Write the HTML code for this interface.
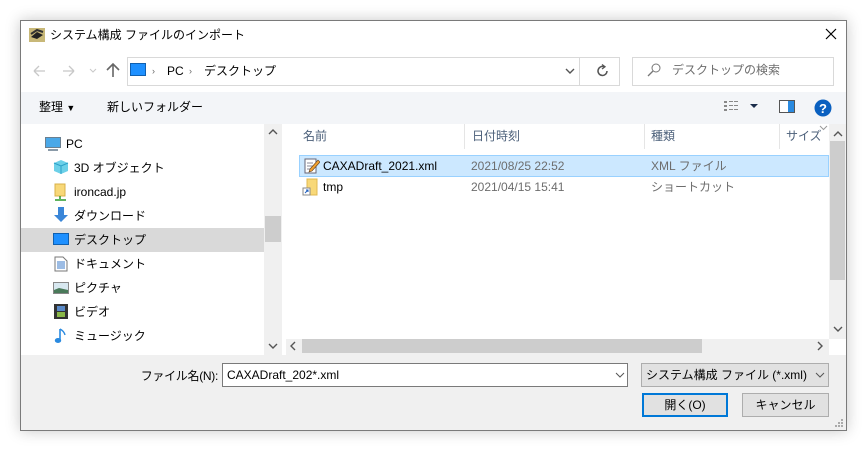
<!DOCTYPE html>
<html><head><meta charset="utf-8"><style>
*{margin:0;padding:0;box-sizing:border-box}
body{width:867px;height:451px;background:#fff;position:relative;overflow:hidden;font-family:"Liberation Sans","Noto Sans CJK JP",sans-serif;font-size:12px;color:#000}
.a{position:absolute}
.win{left:20px;top:20px;width:827px;height:411px;border:1px solid #7a7a7a;background:#fff;box-shadow:0 0 14px rgba(0,0,0,0.22)}
.t{position:absolute;white-space:nowrap;line-height:16px}
.g{color:#6d6d6d}
</style></head><body>
<div class="a win"></div>
<svg class="a" style="left:29px;top:28px" width="16" height="14"><rect x="0" y="0" width="16" height="14" fill="#c8b878"/><path d="M2 9 L8 4 L14 7 L8 11Z" fill="#222"/><path d="M2 6 L8 2 L14 4" stroke="#333" stroke-width="2" fill="none"/></svg>
<div class="t" style="left:50px;top:27px">システム構成 ファイルのインポート</div>
<svg class="a" style="left:825px;top:28px" width="12" height="12"><path d="M1 1L11 11M11 1L1 11" stroke="#000" stroke-width="1.2"/></svg>
<svg class="a" style="left:32px;top:63px" width="80" height="16"><path d="M2 8H13M2 8L7 3M2 8L7 13" stroke="#c8c8c8" stroke-width="1.3" fill="none"/><path d="M31 8H42M42 8L37 3M42 8L37 13" stroke="#c8c8c8" stroke-width="1.3" fill="none"/><path d="M58 6L61 9L64 6" stroke="#c8c8c8" fill="none"/></svg>
<svg class="a" style="left:105px;top:61px" width="16" height="18"><path d="M8 16V3M2 9L8 3L14 9" stroke="#666" stroke-width="1.6" fill="none"/></svg>
<div class="a" style="left:127px;top:57px;width:453px;height:29px;border:1px solid #d9d9d9"></div>
<div class="a" style="left:579px;top:57px;width:41px;height:29px;border:1px solid #d9d9d9"></div>
<div class="a" style="left:632px;top:57px;width:202px;height:29px;border:1px solid #d9d9d9"></div>
<div class="a" style="left:130px;top:63px;width:16px;height:13px;background:#1e90ff;border:1px solid #1060b0"></div>
<div class="t" style="left:152px;top:63px;font-size:9px;color:#666">›</div>
<div class="t" style="left:167px;top:63px">PC</div>
<div class="t" style="left:189px;top:63px;font-size:9px;color:#666">›</div>
<div class="t" style="left:204px;top:63px">デスクトップ</div>
<svg class="a" style="left:565px;top:67px" width="10" height="8"><path d="M1 2L5 6L9 2" stroke="#555" stroke-width="1.4" fill="none"/></svg>
<svg class="a" style="left:596px;top:64px" width="14" height="14"><path d="M11 7A4.5 4.5 0 1 1 8 2.7" stroke="#555" stroke-width="1.5" fill="none"/><path d="M6 0.5L9 2.7L6 5" stroke="#555" stroke-width="1.3" fill="none"/></svg>
<svg class="a" style="left:647px;top:63px" width="14" height="14"><circle cx="9" cy="5" r="4" stroke="#777" fill="none"/><path d="M6 8L1 13" stroke="#777" stroke-width="1.3"/></svg>
<div class="t g" style="left:672px;top:62px">デスクトップの検索</div>
<div class="a" style="left:21px;top:92px;width:825px;height:32px;background:#f3f5f8"></div>
<div class="t" style="left:39px;top:99px">整理 <span style="font-size:9px">▼</span></div>
<div class="t" style="left:107px;top:99px">新しいフォルダー</div>
<svg class="a" style="left:723px;top:100px" width="40" height="14"><g fill="#888"><rect x="1" y="1" width="3" height="2"/><rect x="1" y="5" width="3" height="2"/><rect x="1" y="9" width="3" height="2"/><rect x="6" y="1" width="4" height="1"/><rect x="11" y="1" width="4" height="1"/><rect x="6" y="5" width="4" height="1"/><rect x="11" y="5" width="4" height="1"/><rect x="6" y="9" width="4" height="1"/><rect x="11" y="9" width="4" height="1"/></g><path d="M27 4H35L31 8Z" fill="#1a2c4a"/></svg>
<svg class="a" style="left:779px;top:100px" width="17" height="14"><rect x="0.5" y="0.5" width="15" height="12" fill="#fff" stroke="#555"/><rect x="9" y="1" width="6" height="11" fill="#2a8ae0"/></svg>
<svg class="a" style="left:814px;top:99px" width="18" height="18"><circle cx="9" cy="9" r="8.5" fill="#0a60c0"/><text x="9" y="14" font-size="13" font-weight="bold" fill="#fff" text-anchor="middle" font-family="Liberation Sans">?</text></svg>
<div class="a" style="left:264px;top:124px;width:18px;height:231px;background:#f0f0f0"></div>
<div class="a" style="left:265px;top:216px;width:16px;height:26px;background:#cdcdcd"></div>
<svg class="a" style="left:268px;top:128px" width="10" height="8"><path d="M1 6L5 2L9 6" stroke="#555" stroke-width="1.4" fill="none"/></svg>
<svg class="a" style="left:268px;top:342px" width="10" height="8"><path d="M1 2L5 6L9 2" stroke="#555" stroke-width="1.4" fill="none"/></svg>
<div class="a" style="left:21px;top:228px;width:243px;height:24px;background:#d9d9d9"></div>
<div class="a" style="left:45px;top:137px;width:16px;height:11px;background:#4aa8e8;border:1px solid #6a7f90"></div><div class="a" style="left:48px;top:149px;width:10px;height:2px;background:#8a9aa8"></div>
<div class="t" style="left:66px;top:136px">PC</div>
<svg class="a" style="left:53px;top:159px" width="16" height="16"><path d="M8 1L15 4V12L8 15L1 12V4Z" fill="#6cd0e8"/><path d="M1 4L8 7L15 4M8 7V15" stroke="#2aa0c8" fill="none"/></svg>
<div class="t" style="left:74px;top:160px">3D オブジェクト</div>
<svg class="a" style="left:54px;top:183px" width="14" height="18"><rect x="1" y="1" width="10" height="12" fill="#f8d878" stroke="#d8b048"/><path d="M6 13V16M1 17H12" stroke="#2a9a2a" stroke-width="1.5"/></svg>
<div class="t" style="left:74px;top:184px">ironcad.jp</div>
<svg class="a" style="left:52px;top:206px" width="18" height="18"><path d="M6 1H12V9H16L9 16L2 9H6Z" fill="#3a86d8"/></svg>
<div class="t" style="left:74px;top:208px">ダウンロード</div>
<div class="a" style="left:53px;top:233px;width:16px;height:12px;background:#1e90ff;border:1px solid #1060b0"></div>
<div class="t" style="left:74px;top:232px">デスクトップ</div>
<svg class="a" style="left:54px;top:256px" width="14" height="16"><path d="M1 1H9L13 5V15H1Z" fill="#fff" stroke="#777"/><path d="M3 6H11M3 8H11M3 10H11M3 12H11" stroke="#3a7ac8"/></svg>
<div class="t" style="left:74px;top:256px">ドキュメント</div>
<svg class="a" style="left:53px;top:282px" width="16" height="12"><rect x="0.5" y="0.5" width="15" height="11" fill="#d8e8f0" stroke="#888"/><path d="M1 8L6 6L15 8V11H1Z" fill="#4a7a5a"/></svg>
<div class="t" style="left:74px;top:280px">ピクチャ</div>
<svg class="a" style="left:54px;top:304px" width="14" height="15"><rect width="14" height="15" fill="#333"/><rect x="3" y="2" width="8" height="5" fill="#5a8ac8"/><rect x="3" y="8" width="8" height="5" fill="#8ab848"/></svg>
<div class="t" style="left:74px;top:304px">ビデオ</div>
<svg class="a" style="left:54px;top:327px" width="14" height="17"><path d="M6 2V13" stroke="#2a8ae0" stroke-width="1.6"/><ellipse cx="4" cy="13.5" rx="3.2" ry="2.5" fill="#2a8ae0"/><path d="M6 2Q10 4 11 8" stroke="#2a8ae0" stroke-width="1.4" fill="none"/></svg>
<div class="t" style="left:74px;top:328px">ミュージック</div>
<div class="a" style="left:464px;top:124px;width:1px;height:25px;background:#e5e5e5"></div>
<div class="a" style="left:644px;top:124px;width:1px;height:25px;background:#e5e5e5"></div>
<div class="a" style="left:779px;top:124px;width:1px;height:25px;background:#e5e5e5"></div>
<div class="t g" style="left:303px;top:128px;color:#4c607a">名前</div>
<div class="t g" style="left:472px;top:128px;color:#4c607a">日付時刻</div>
<div class="t g" style="left:651px;top:128px;color:#4c607a">種類</div>
<div class="t g" style="left:786px;top:128px;color:#4c607a">サイズ</div>
<svg class="a" style="left:819px;top:125px" width="9" height="6"><path d="M1 1L4.5 4.5L8 1" stroke="#999" fill="none"/></svg>
<div class="a" style="left:299px;top:155px;width:530px;height:22px;background:#cce8ff;border:1px solid #99d1ff"></div>
<svg class="a" style="left:304px;top:157px" width="16" height="17"><path d="M1 2H12V16H1Z" fill="#fff" stroke="#667"/><path d="M3 6H9M3 9H9M3 12H7" stroke="#889"/><path d="M6 12L14 3L16 5L8 14L5 15Z" fill="#f0a030" stroke="#604020" stroke-width="0.6"/></svg>
<div class="t" style="left:323px;top:158px">CAXADraft_2021.xml</div>
<div class="t g" style="left:471px;top:158px">2021/08/25 22:52</div>
<div class="t g" style="left:651px;top:158px">XML ファイル</div>
<svg class="a" style="left:302px;top:178px" width="17" height="18"><rect x="5" y="1" width="10" height="16" fill="#f8d878" stroke="#e0b850"/><rect x="1" y="10" width="7" height="7" fill="#fff" stroke="#888"/><path d="M3 15L6 12M4 12H6V14" stroke="#2060c0"/></svg>
<div class="t" style="left:323px;top:179px">tmp</div>
<div class="t g" style="left:471px;top:179px">2021/04/15 15:41</div>
<div class="t g" style="left:651px;top:179px">ショートカット</div>
<div class="a" style="left:829px;top:124px;width:17px;height:215px;background:#f0f0f0"></div>
<div class="a" style="left:830px;top:141px;width:15px;height:139px;background:#cdcdcd"></div>
<svg class="a" style="left:833px;top:130px" width="10" height="8"><path d="M1 6L5 2L9 6" stroke="#555" stroke-width="1.4" fill="none"/></svg>
<svg class="a" style="left:833px;top:325px" width="10" height="8"><path d="M1 2L5 6L9 2" stroke="#555" stroke-width="1.4" fill="none"/></svg>
<div class="a" style="left:286px;top:339px;width:543px;height:16px;background:#f0f0f0"></div>
<div class="a" style="left:302px;top:339px;width:400px;height:14px;background:#cdcdcd"></div>
<svg class="a" style="left:289px;top:341px" width="8" height="10"><path d="M6 1L2 5L6 9" stroke="#555" stroke-width="1.4" fill="none"/></svg>
<svg class="a" style="left:816px;top:341px" width="8" height="10"><path d="M2 1L6 5L2 9" stroke="#555" stroke-width="1.4" fill="none"/></svg>
<div class="a" style="left:21px;top:355px;width:825px;height:75px;background:#f0f0f0"></div>
<div class="t" style="left:100px;top:368px;width:118px;text-align:right;letter-spacing:-0.3px">ファイル名(N):</div>
<div class="a" style="left:222px;top:363px;width:406px;height:24px;background:#fff;border:1px solid #7a7a7a"></div>
<div class="t" style="left:227px;top:367px">CAXADraft_202*.xml</div>
<svg class="a" style="left:615px;top:372px" width="10" height="7"><path d="M1 1L5 5L9 1" stroke="#555" fill="none"/></svg>
<div class="a" style="left:641px;top:363px;width:188px;height:24px;background:#e1e1e1;border:1px solid #adadad"></div>
<div class="t" style="left:646px;top:367px">システム構成 ファイル (*.xml)</div>
<svg class="a" style="left:815px;top:372px" width="10" height="7"><path d="M1 1L5 5L9 1" stroke="#555" fill="none"/></svg>
<div class="a" style="left:642px;top:393px;width:86px;height:24px;background:#e1e1e1;border:2px solid #0078d7"></div>
<div class="t" style="left:642px;top:397px;width:86px;text-align:center">開く(O)</div>
<div class="a" style="left:742px;top:393px;width:87px;height:24px;background:#e1e1e1;border:1px solid #adadad"></div>
<div class="t" style="left:742px;top:397px;width:87px;text-align:center">キャンセル</div>
<svg class="a" style="left:835px;top:419px" width="9" height="9"><g fill="#aaa"><rect x="6" y="0" width="2" height="2"/><rect x="3" y="3" width="2" height="2"/><rect x="6" y="3" width="2" height="2"/><rect x="0" y="6" width="2" height="2"/><rect x="3" y="6" width="2" height="2"/><rect x="6" y="6" width="2" height="2"/></g></svg>
</body></html>
